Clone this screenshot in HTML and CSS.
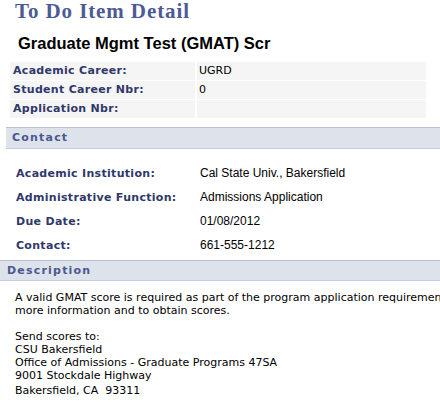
FILE: index.html
```html
<!DOCTYPE html>
<html>
<head>
<meta charset="utf-8">
<link rel="stylesheet" href="styles.css">
</head>
<body>
<div class="page">
  <h1 class="title">To Do Item Detail</h1>
  <h2 class="subtitle">Graduate Mgmt Test (GMAT) Scr</h2>
  <div class="grid">
    <div class="gl">Academic Career:</div><div class="gv">UGRD</div>
    <div class="gl">Student Career Nbr:</div><div class="gv">0</div>
    <div class="gl">Application Nbr:</div><div class="gv"></div>
  </div>
  <div class="sect contact-h">Contact</div>
  <div class="contact">
    <div class="cl">Academic Institution:</div><div class="cv">Cal State Univ., Bakersfield</div>
    <div class="cl">Administrative Function:</div><div class="cv">Admissions Application</div>
    <div class="cl">Due Date:</div><div class="cv">01/08/2012</div>
    <div class="cl">Contact:</div><div class="cv">661-555-1212</div>
  </div>
  <div class="sect desc-h">Description</div>
  <div class="desc">
    <p class="para">A valid GMAT score is required as part of the program application requirements. Contact the school for<br>more information and to obtain scores.</p>
    <p class="addr">Send scores to:<br>CSU Bakersfield<br>Office of Admissions - Graduate Programs 47SA<br>9001 Stockdale Highway</p>
    <p class="last">Bakersfield, CA&nbsp; 93311</p>
  </div>
</div>
</body>
</html>
```
FILE: styles.css
```css
html, body { margin: 0; padding: 0; background: #fff; }
body { width: 440px; height: 402px; overflow: hidden; }
.page { width: 440px; overflow: hidden; }
.title {
  margin: 0; padding: 0 0 0 15px;
  font-family: "Liberation Serif", serif; font-weight: bold; font-size: 21px;
  letter-spacing: 0.9px;
  color: #4d5b94; line-height: 23px; height: 28px;
}
.subtitle {
  margin: 0; padding: 5px 0 0 18px;
  font-family: "Liberation Sans", sans-serif; font-weight: bold; font-size: 16.5px;
  color: #000; line-height: 20px; height: 31px; box-sizing: border-box;
}
.grid {
  margin: 3px 0 0 10px; width: 416px;
  display: grid; grid-template-columns: 185px 1fr;
  column-gap: 2px; row-gap: 1px;
}
.gl, .gv {
  background: #f5f5f5; height: 18px; line-height: 18px;
  font-family: "DejaVu Sans", Verdana, sans-serif; font-size: 11px;
}
.gl { font-weight: bold; color: #30386a; padding-left: 3px; letter-spacing: 0.3px; }
.gv { color: #000; padding-left: 2px; }
.sect {
  font-family: "DejaVu Sans", Verdana, sans-serif; font-size: 11px; font-weight: bold;
  color: #4b5890; letter-spacing: 1.2px;
  background: #dde2eb; border-top: 1px solid #b9c0d9; border-bottom: 1px solid #c6cce0;
  line-height: 20px; box-sizing: border-box;
}
.contact-h { margin: 9px 0 0 6px; padding-left: 6px; height: 22px; }
.contact {
  display: grid; grid-template-columns: 184px 1fr;
  margin: 17px 0 0 16px; row-gap: 9px;
}
.cl, .cv { height: 15px; line-height: 15px; }
.cl { font-family: "DejaVu Sans", Verdana, sans-serif; font-size: 11px; font-weight: bold; color: #30386a; letter-spacing: 0.3px; }
.cv { font-family: "Liberation Sans", Arial, sans-serif; font-size: 12px; color: #000; }
.desc-h { margin: 7px 0 0 0; padding-left: 7px; height: 21px; }
.desc {
  padding-left: 15px; white-space: nowrap;
  font-family: "DejaVu Sans", Verdana, sans-serif; font-size: 11px; color: #000; line-height: 13px;
}
.para { margin: 10px 0 0 0; }
.addr { margin: 13px 0 0 0; }
.last { margin: 2px 0 0 0; }
```
